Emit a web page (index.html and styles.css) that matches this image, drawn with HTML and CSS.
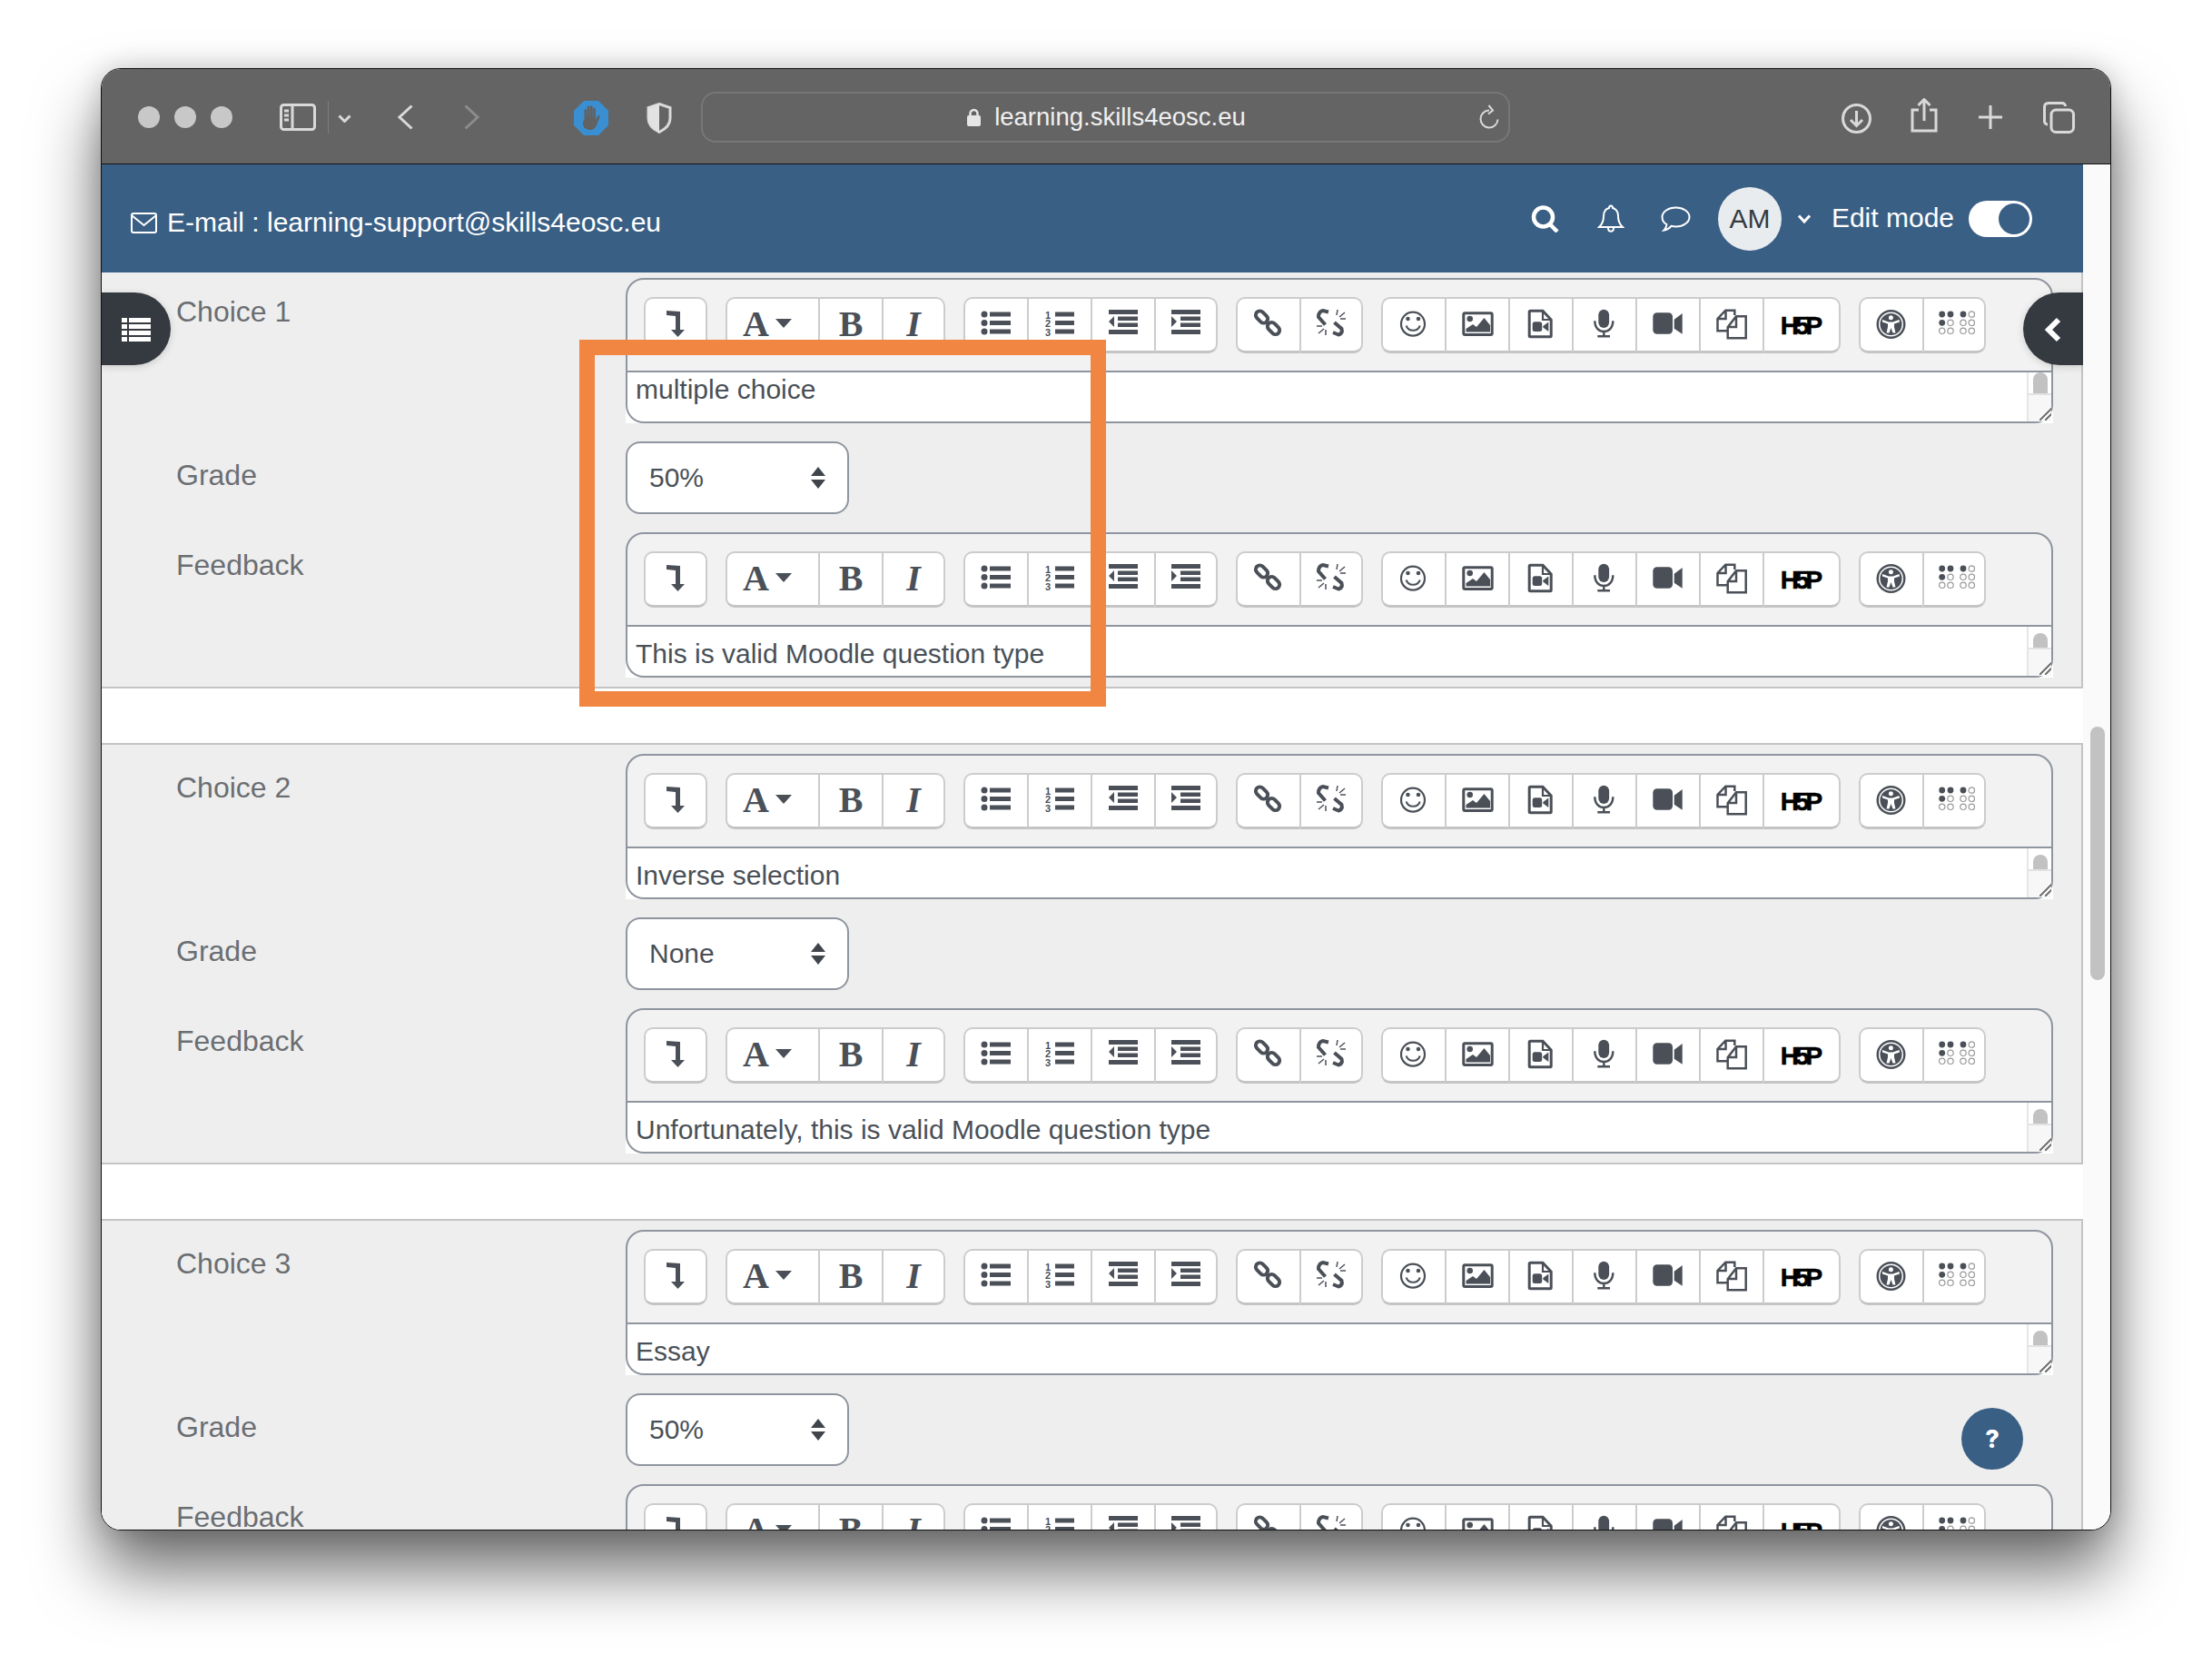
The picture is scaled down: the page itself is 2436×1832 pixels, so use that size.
FILE: index.html
```html
<!DOCTYPE html>
<html lang="en">
<head>
    <meta charset="UTF-8">
    <meta name="viewport" content="width=device-width, initial-scale=1.0">
    <title>Multiple choice question</title>
    <link rel="stylesheet" href="styles.css">
</head>
<body>

<!-- toolbar icons, each drawn on a 40x40 box -->
<svg class="sprite" aria-hidden="true">
    <symbol id="i-collapse" viewBox="0 0 40 40"><path d="M10 5l15 1v20h5l-7.500 8-7.500-8h5V11l-10-1z"/></symbol>
    <symbol id="i-ul" viewBox="0 0 40 40"><circle cx="7" cy="9" r="3.500"/><circle cx="7" cy="18.500" r="3.500"/><circle cx="7" cy="28" r="3.500"/><path d="M13 6.500h23v5H13zM13 16h23v5H13zM13 25.500h23v5H13z"/></symbol>
    <symbol id="i-ol" viewBox="0 0 21 40"><path d="M0 6.500h21v5H0zM0 16h21v5H0zM0 25.500h21v5H0z"/></symbol>
    <symbol id="i-outdent" viewBox="0 0 40 40"><path d="M4 4h32v5H4zM14 11.500h22v4.500H14zM14 18.500h22v4.500H14zM4 26h32v5H4zM10 11v12l-6-6z"/></symbol>
    <symbol id="i-indent" viewBox="0 0 40 40"><path d="M4 4h32v5H4zM14 11.500h22v4.500H14zM14 18.500h22v4.500H14zM4 26h32v5H4zM4 11v12l6-6z"/></symbol>
    <symbol id="i-link" viewBox="0 0 40 40"><g class="line"><rect x="5" y="7.500" width="15" height="9" rx="4.500" transform="rotate(45 12.500 12)"/><rect x="18" y="20" width="15" height="9" rx="4.500" transform="rotate(45 25.500 24.500)"/></g></symbol>
    <symbol id="i-unlink" viewBox="0 0 40 40"><g class="line"><path d="M17 6.500L11 5Q6 6 6 12l7.500 8.500M23.500 18l8 7q1.500 5-3.500 6.500L22 29"/></g><g class="thin hair"><path d="M27 4l-1 6M35 7l-6 5M36 14h-6M4 22h6M6 30l6-5M14 32v-6"/></g></symbol>
    <symbol id="i-emoji" viewBox="0 0 40 40"><circle class="thin" cx="19" cy="19.700" r="13"/><circle cx="13.500" cy="14" r="2.300"/><circle cx="25" cy="14" r="2.300"/><path class="thin" d="M11.700 21.500c2 7 13 7 15 0"/></symbol>
    <symbol id="i-image" viewBox="0 0 40 40"><rect class="line thick" x="4.800" y="7.800" width="31.400" height="23.700" rx="1.500"/><circle cx="11.700" cy="14" r="3.300"/><path d="M7.500 28.500V25l7.500-5 4 3 8.500-10 6.500 8v7.500z"/></symbol>
    <symbol id="i-doc" viewBox="0 0 40 40"><path class="line thick" d="M8.500 5.200H22l9.200 9.800v17.800q0 1-1 1H8.500q-1.300 0-1.300-1V6.200q0-1 1.300-1z"/><path class="line thin" d="M22 5.200v9.800h9.200"/><rect x="10.700" y="17.300" width="10.500" height="10.700" rx="2.500"/><path d="M22.300 22l6-4.500v10.500l-6-4.500z"/></symbol>
    <symbol id="i-mic" viewBox="0 0 40 40"><rect x="13.300" y="3.700" width="11.800" height="20.300" rx="5.900"/><path class="line mic-arc" d="M9.300 16.300c0 15.700 20 15.700 20 0M19.300 28v4.500"/><path d="M12.300 32h13.700v2.500H12.300z"/></symbol>
    <symbol id="i-video" viewBox="0 0 40 40"><rect x="3.300" y="7.300" width="21.700" height="23.400" rx="4.500"/><path d="M26.700 14.700L35.700 8v22.700l-9-6z"/></symbol>
    <symbol id="i-copy" viewBox="0 0 40 40"><path class="line mic-arc" d="M23.300 10V4.700h-10L4.500 14v13.300H15M13.500 4.700V14H4.500"/><path class="line mic-arc" d="M25 11.300h10.700v24H15.700v-12zM25 11.300V23h-9.300"/></symbol>
    <symbol id="i-access" viewBox="0 0 40 40"><circle cx="19.500" cy="20" r="16"/><circle class="white-line" cx="19.500" cy="20" r="12.800"/><circle class="white-fill" cx="19.400" cy="12.700" r="2.500"/><path class="white-fill" d="M10 15l7 2.500h4.500l7-2.500.500 2.500-6 2V23l1.500 6.500h-3L19.500 24l-2 5.500h-3L16 23v-3.500l-6-2z"/></symbol>
    <symbol id="i-braille" viewBox="0 0 46 40">
        <circle cx="9.700" cy="9" r="3.400"/><circle cx="19" cy="9" r="3.400"/><circle cx="33" cy="9" r="3.400"/><circle class="dot" cx="42.300" cy="9" r="3.200"/>
        <circle cx="9.700" cy="18.300" r="3.400"/><circle class="dot" cx="19" cy="18.300" r="3.200"/><circle class="dot" cx="33" cy="18.300" r="3.200"/><circle class="dot" cx="42.300" cy="18.300" r="3.200"/>
        <circle class="dot" cx="9.700" cy="27.300" r="3.200"/><circle class="dot" cx="19" cy="27.300" r="3.200"/><circle class="dot" cx="33" cy="27.300" r="3.200"/><circle class="dot" cx="42.300" cy="27.300" r="3.200"/>
    </symbol>
</svg>

<div class="stage">
    <div class="window">

        <div class="browserbar">
            <span class="traffic"><i></i><i></i><i></i></span>

            <svg class="ic-sidebar" viewBox="0 0 40 30"><rect x="1.500" y="1.500" width="37" height="27" rx="3"/><path d="M14 1.500v27M5 8h5M5 13h5M5 18h5"/></svg>
            <span class="bar-sep"></span>
            <svg class="ic-down" viewBox="0 0 15 9"><path d="M1.500 1.500l6 6 6-6"/></svg>
            <svg class="ic-back" viewBox="0 0 17 28"><path d="M15.500 1.500L2 14l13.500 12.500"/></svg>
            <svg class="ic-forward" viewBox="0 0 17 28"><path d="M1.500 1.500L15 14 1.500 26.500"/></svg>

            <svg class="ic-hand" viewBox="0 0 38 38">
                <path class="octagon" d="M11 0h16l11 11v16L27 38H11L0 27V11z"/>
                <path class="hand" d="M11.500 20v-9.500c0-1.800 2.800-1.800 2.800 0V17h.4V7c0-1.800 2.800-1.800 2.800 0v10h.4V6.500c0-1.800 2.800-1.800 2.800 0V17h.4V9c0-1.800 2.800-1.800 2.800 0v12l2-4c1-1.800 3.400-.800 2.600 1l-3.600 9c-1.200 3-3.500 5-7 5-5 0-8-3-8-8z"/>
            </svg>
            <svg class="ic-shield" viewBox="0 0 28 34"><path class="shield-line" d="M14 1.500l12 4v12c0 7-6 12-12 15-6-3-12-8-12-15v-12z"/><path class="shield-fill" d="M14 1.500v31c-6-3-12-8-12-15v-12z"/></svg>

            <div class="urlbar">
                <span></span>
                <span class="url">
                    <svg class="ic-lock" viewBox="0 0 15 20"><path class="shackle" d="M3.500 9V6a4 4 0 018 0v3"/><rect y="8" width="15" height="12" rx="2"/></svg>
                    learning.skills4eosc.eu
                </span>
                <svg class="ic-reload" viewBox="0 0 22 28"><path d="M11 6.500a9.500 9.500 0 109.500 10M10.500 1l4.500 5.500-5 4"/></svg>
            </div>

            <svg class="ic-download" viewBox="0 0 33 33"><circle cx="16.500" cy="16.500" r="15"/><path d="M16.500 8v16M10 18l6.500 6.500L23 18"/></svg>
            <svg class="ic-share" viewBox="0 0 30 38"><path d="M9 13H2v23h26V13h-7M15 25V2M8.500 8L15 1.500 21.500 8"/></svg>
            <svg class="ic-plus" viewBox="0 0 28 28"><path d="M14 1v26M1 14h26"/></svg>
            <svg class="ic-tabs" viewBox="0 0 35 35"><rect x="9" y="9" width="24.500" height="24.500" rx="5"/><path d="M5 25c-2 0-3.500-1.500-3.500-3.500V6C1.500 3 3 1.500 6 1.500h15c2 0 3.500 1.500 3.500 3.500"/></svg>
        </div>

        <div class="viewport">
            <div class="page">

                <header class="topnav">
                    <div class="support">
                        <svg class="ic-mail" viewBox="0 0 29 23"><rect x="1" y="1" width="27" height="21" rx="2"/><path d="M1.500 3.500L14.500 14l13-10.500"/></svg>
                        <span>E-mail : learning-support@skills4eosc.eu</span>
                    </div>
                    <div class="usernav">
                        <svg class="ic-search" viewBox="0 0 31 30"><circle cx="13.500" cy="13" r="10.500"/><path d="M21 21l8 8"/></svg>
                        <svg class="ic-bell" viewBox="0 0 30 32"><path d="M15 1.500c-1.500 0-2 1-2 2.500-4 1-6 4-6 9 0 6-1.500 9-5 12h26c-3.500-3-5-6-5-12 0-5-2-8-6-9 0-1.500-.500-2.500-2-2.500zM12 26c0 5 6 5 6 0"/></svg>
                        <svg class="ic-chat" viewBox="0 0 33 28"><path d="M16.500 1.500c8 0 15 4.500 15 10.500s-7 10.500-15 10.500c-2 0-3.500-.200-5-.700-2 2.500-5 4.200-8 4.700 1.500-1.500 2.700-3.500 3-6.300C3.500 18.500 1.500 15.500 1.500 12c0-6 7-10.500 15-10.500z"/></svg>
                        <span class="avatar">AM</span>
                        <svg class="ic-caret" viewBox="0 0 16 12"><path d="M2 2.500l6 6.500 6-6.500"/></svg>
                        <span class="editmode">Edit mode</span>
                        <span class="toggle"><i></i></span>
                    </div>
                </header>

                <div id="choices"></div>

                <button class="drawer drawer-left" type="button">
                    <svg class="ic-list" viewBox="0 0 32 26"><path d="M0 0h6v5H0zM8 0h24v5H8zM0 7h6v5H0zM8 7h24v5H8zM0 14h6v5H0zM8 14h24v5H8zM0 21h6v5H0zM8 21h24v5H8z"/></svg>
                </button>
                <button class="drawer drawer-right" type="button">
                    <svg class="ic-left" viewBox="0 0 20 28"><path d="M16 3L5 14l11 11"/></svg>
                </button>
                <button class="help" type="button">?</button>
            </div>
            <div class="vscroll"><span></span></div>
        </div>
    </div>

    <!-- orange annotation drawn on the screenshot -->
    <div class="callout"></div>
</div>

<script>
    const use = id => `<svg class="icon"><use href="#${id}"/></svg>`;

    const toolbar = `
        <div class="toolbar">
            <div class="group"><span class="btn">${use('i-collapse')}</span></div>
            <div class="group">
                <span class="btn btn-style"><span class="serif serif-a">A</span><i class="tri"></i></span>
                <span class="btn"><span class="serif">B</span></span>
                <span class="btn"><span class="serif serif-i">I</span></span>
            </div>
            <div class="group">
                <span class="btn">${use('i-ul')}</span>
                <span class="btn btn-ol"><span class="ol-nums">1<br>2<br>3</span><svg class="icon icon-ol"><use href="#i-ol"/></svg></span>
                <span class="btn">${use('i-outdent')}</span>
                <span class="btn">${use('i-indent')}</span>
            </div>
            <div class="group">
                <span class="btn">${use('i-link')}</span>
                <span class="btn">${use('i-unlink')}</span>
            </div>
            <div class="group">
                <span class="btn">${use('i-emoji')}</span>
                <span class="btn">${use('i-image')}</span>
                <span class="btn">${use('i-doc')}</span>
                <span class="btn">${use('i-mic')}</span>
                <span class="btn">${use('i-video')}</span>
                <span class="btn">${use('i-copy')}</span>
                <span class="btn btn-h5p"><span class="h5p">H5P</span></span>
            </div>
            <div class="group">
                <span class="btn">${use('i-access')}</span>
                <span class="btn"><svg class="icon icon-braille"><use href="#i-braille"/></svg></span>
            </div>
        </div>`;

    const editor = (text, extra = '') => `
        <div class="editor">
            ${toolbar}
            <div class="editor-body">
                <div class="editor-inner">
                    <div class="editor-text ${extra}">${text}</div>
                    <div class="editor-scroll"><div class="scroll-top"><i></i></div><div class="scroll-grip"></div></div>
                </div>
            </div>
        </div>`;

    const select = value => `
        <div class="select">
            <span>${value}</span>
            <svg class="select-arrows" viewBox="0 0 16 24"><path d="M8 0l8 10H0zM0 14h16L8 24z"/></svg>
        </div>`;

    const choices = [
        { name: 'Choice 1', answer: 'multiple choice', grade: '50%', feedback: 'This is valid Moodle question type', cls: 'box-first', extra: 'editor-text-up' },
        { name: 'Choice 2', answer: 'Inverse selection', grade: 'None', feedback: 'Unfortunately, this is valid Moodle question type', cls: '', extra: '' },
        { name: 'Choice 3', answer: 'Essay', grade: '50%', feedback: '', cls: '', extra: '' }
    ];

    document.getElementById('choices').innerHTML = choices.map(c => `
        <section class="box ${c.cls}">
            <div class="row row-editor"><label>${c.name}</label>${editor(c.answer, c.extra)}</div>
            <div class="row row-select"><label>Grade</label>${select(c.grade)}</div>
            <div class="row"><label>Feedback</label>${editor(c.feedback)}</div>
        </section>`).join('');
</script>
</body>
</html>
```

FILE: styles.css
```css
* {
    box-sizing: border-box;
}
html, body {
    margin: 0;
    padding: 0;
    background: #fff;
}
body {
    font-family: 'Liberation Sans', Arial, sans-serif;
    font-size: 30px;
    color: #495057;
}
.sprite {
    position: absolute;
    width: 0;
    height: 0;
}
.stage {
    position: relative;
    width: 2436px;
    height: 1832px;
    padding: 75px 0 0 111px;
    overflow: hidden;
}
.window {
    display: flex;
    flex-direction: column;
    width: 2214px;
    height: 1610px;
    background: #fff;
    border: 1px solid #111;
    border-radius: 22px;
    overflow: hidden;
    box-shadow: 0 44px 72px rgba(0, 0, 0, 0.58), 0 0 30px rgba(0, 0, 0, 0.18);
}

/* safari bar */
.browserbar {
    display: flex;
    align-items: center;
    flex: none;
    height: 105px;
    padding: 0 0 0 40px;
    background: #646464;
    border-bottom: 1px solid #111;
}
.browserbar svg {
    flex: none;
    fill: none;
    stroke: #d9d9d9;
    stroke-width: 3;
}
.traffic {
    display: flex;
    gap: 16px;
    margin-top: 2px;
}
.traffic i {
    width: 24px;
    height: 24px;
    border-radius: 50%;
    background: #c8c8c8;
}
.ic-sidebar {
    width: 40px;
    height: 30px;
    margin: 2px 0 0 52px;
}
.bar-sep {
    width: 1px;
    height: 36px;
    margin: 2px 0 0 13px;
    background: #7d7d7d;
}
.ic-down {
    width: 15px;
    height: 9px;
    margin: 4px 0 0 10px;
}
.ic-back {
    width: 17px;
    height: 28px;
    margin: 2px 0 0 51px;
}
.ic-forward {
    width: 17px;
    height: 28px;
    margin: 2px 0 0 56px;
}
.browserbar .ic-forward {
    stroke: #8c8c8c;
}
.ic-hand {
    width: 38px;
    height: 38px;
    margin: 4px 0 0 104px;
}
.browserbar .octagon {
    fill: #3a8fd2;
    stroke: none;
}
.browserbar .hand {
    fill: #626262;
    stroke: none;
}
.ic-shield {
    width: 28px;
    height: 34px;
    margin: 3px 0 0 42px;
}
.browserbar .shield-fill {
    fill: #e2e2e2;
    stroke: none;
}
.urlbar {
    display: grid;
    grid-template-columns: 1fr auto 1fr;
    align-items: center;
    width: 891px;
    height: 56px;
    margin: 1px 0 0 32px;
    padding: 0 10px 0 12px;
    border: 2px solid #777;
    border-radius: 16px;
}
.url {
    display: flex;
    align-items: center;
    gap: 15px;
    font-size: 27.500px;
    color: #f0f0f0;
}
.browserbar .ic-lock {
    width: 15px;
    height: 20px;
    fill: #e6e6e6;
    stroke: none;
}
.browserbar .shackle {
    fill: none;
    stroke: #e6e6e6;
    stroke-width: 2.500;
}
.ic-reload {
    width: 22px;
    height: 28px;
    justify-self: end;
}
.browserbar .ic-reload {
    stroke-width: 2;
}
.ic-download {
    width: 33px;
    height: 33px;
    margin: 4px 0 0 365px;
}
.ic-share {
    width: 30px;
    height: 38px;
    margin: -3px 0 0 43px;
}
.ic-plus {
    width: 28px;
    height: 28px;
    margin: 2px 0 0 44px;
}
.ic-tabs {
    width: 35px;
    height: 35px;
    margin: 3px 0 0 44px;
}

/* page below the browser bar */
.viewport {
    display: flex;
    flex: 1;
    min-height: 0;
}
.page {
    position: relative;
    width: 2182px;
    overflow: hidden;
    background: #fff;
}
.vscroll {
    flex: 1;
    padding: 619px 0 0 8px;
    background: #fafafa;
}
.vscroll span {
    display: block;
    width: 16px;
    height: 279px;
    border-radius: 8px;
    background: #c2c2c2;
}

.topnav {
    display: flex;
    align-items: center;
    justify-content: space-between;
    height: 119px;
    padding: 0 56px 0 32px;
    background: #3a5f85;
    color: #fff;
}
.topnav svg {
    flex: none;
    fill: none;
    stroke: #fff;
}
.support {
    display: flex;
    align-items: center;
    gap: 11px;
    margin-top: 9px;
}
.ic-mail {
    width: 29px;
    height: 23px;
    stroke-width: 2;
}
.usernav {
    display: flex;
    align-items: center;
}
.ic-search {
    width: 31px;
    height: 30px;
    stroke-width: 4.500;
}
.ic-bell {
    width: 30px;
    height: 32px;
    margin-left: 42px;
    stroke-width: 2;
}
.ic-chat {
    width: 33px;
    height: 28px;
    margin-left: 40px;
    stroke-width: 2;
}
.avatar {
    display: flex;
    align-items: center;
    justify-content: center;
    width: 70px;
    height: 70px;
    margin-left: 30px;
    border-radius: 50%;
    background: #e9ecef;
    color: #343a40;
}
.ic-caret {
    width: 16px;
    height: 12px;
    margin-left: 17px;
    stroke-width: 3;
}
.editmode {
    margin-left: 22px;
    margin-bottom: 2px;
}
.toggle {
    display: flex;
    justify-content: flex-end;
    align-items: center;
    width: 70px;
    height: 40px;
    margin-left: 16px;
    padding-right: 3px;
    border-radius: 20px;
    background: #fff;
}
.toggle i {
    width: 34px;
    height: 34px;
    border-radius: 50%;
    background: #3a5f85;
}

/* one choice block */
.box {
    height: 464px;
    margin-bottom: 60px;
    padding: 10px 32px 0 0;
    background: #eeeeee;
    border-top: 2px solid #c4c4c4;
    border-bottom: 2px solid #c4c4c4;
    border-right: 2px solid #c4c4c4;
    overflow: hidden;
}
.box-first {
    height: 458px;
    padding-top: 6px;
    border-top: 0;
}
.row {
    display: grid;
    grid-template-columns: 577px 1572px;
    margin-bottom: 20px;
}
.row label {
    padding: 18px 0 0 82px;
    font-size: 32px;
    color: #6a6e72;
}
.row-editor label,
.row-select label {
    padding-top: 19px;
}

.editor {
    height: 160px;
}
.toolbar {
    display: flex;
    gap: 20px;
    height: 104px;
    padding: 19px 18px;
    background: #f2f2f2;
    border: 2px solid #8f959e;
    border-radius: 20px 20px 0 0;
}
.group {
    display: flex;
    height: 62px;
}
.btn {
    display: flex;
    align-items: center;
    justify-content: center;
    width: 70px;
    background: #fff;
    border-top: 2px solid #cccccc;
    border-bottom: 3px solid #c4c4c4;
    border-left: 2px solid #cccccc;
}
.btn:first-child {
    border-radius: 10px 0 0 10px;
}
.btn:last-child {
    border-right: 2px solid #cccccc;
    border-radius: 0 10px 10px 0;
}
.btn:only-child {
    border-radius: 10px;
}
.btn-style {
    width: 102px;
    justify-content: flex-start;
    gap: 7px;
    padding-left: 17px;
}
.btn-h5p {
    width: 86px;
}
.btn-ol {
    gap: 3px;
}
.icon {
    width: 40px;
    height: 40px;
    margin-bottom: 1px;
    fill: #4b5058;
    overflow: visible;
}
.icon-braille {
    width: 46px;
}
.icon-ol {
    width: 21px;
}
.line {
    fill: none;
    stroke: #4b5058;
    stroke-width: 4;
}
.thick {
    stroke-width: 3;
}
.mic-arc {
    stroke-width: 2.500;
}
.thin {
    fill: none;
    stroke: #4b5058;
    stroke-width: 2.200;
}
.hair {
    stroke-width: 1.500;
}
.dot {
    fill: none;
    stroke: #999;
    stroke-width: 1.200;
}
.white-line {
    fill: none;
    stroke: #fff;
    stroke-width: 1.500;
}
.white-fill {
    fill: #fff;
}
.ol-nums {
    width: 8px;
    margin-bottom: 1px;
    font-size: 11px;
    font-weight: bold;
    line-height: 9.500px;
    color: #4b5058;
}
.serif {
    font-family: 'Liberation Serif', serif;
    font-weight: bold;
    font-size: 40px;
    line-height: 1;
    color: #4b5058;
    margin-bottom: 2px;
}
.serif-i {
    font-style: italic;
}
.tri {
    width: 0;
    height: 0;
    margin-bottom: 4px;
    border-left: 9px solid transparent;
    border-right: 9px solid transparent;
    border-top: 10px solid #4b5058;
}
.h5p {
    font-weight: bold;
    font-size: 28px;
    line-height: 1;
    color: #000;
    letter-spacing: -4px;
    -webkit-text-stroke: 0.5px #000;
    padding-right: 4px;
    margin-top: 2px;
}

.editor-body {
    height: 56px;
    background: #fff;
}
.editor-inner {
    display: flex;
    height: 56px;
    border: 2px solid #8f959e;
    border-top: 0;
    border-radius: 0 0 20px 20px;
}
.editor-text {
    flex: 1;
    padding: 10px 0 0 9px;
    line-height: 40px;
    overflow: hidden;
}
.editor-text-up {
    padding-top: 0;
    margin-top: -1px;
}
.editor-scroll {
    width: 27px;
    border-left: 2px solid #e6e6e6;
}
.scroll-top {
    height: 25px;
    padding: 7px 0 0 5px;
    border-bottom: 2px solid #e2e2e2;
}
.scroll-top i {
    display: block;
    width: 16px;
    height: 16px;
    border-radius: 8px 8px 0 0;
    background: #c2c2c2;
}
.editor-text-up + .editor-scroll .scroll-top {
    padding-top: 0;
}
.editor-text-up + .editor-scroll .scroll-top i {
    height: 23px;
}
.scroll-grip {
    height: 29px;
    background:
        linear-gradient(135deg, transparent calc(50% - 1px), #777 calc(50% - 1px), #777 calc(50% + 1px), transparent calc(50% + 1px)) 18px 20px / 8px 8px no-repeat,
        linear-gradient(135deg, transparent calc(50% - 1px), #777 calc(50% - 1px), #777 calc(50% + 1px), transparent calc(50% + 1px)) 12px 14px / 14px 14px no-repeat,
        #f7f7f7;
}

.select {
    display: flex;
    align-items: center;
    justify-content: space-between;
    width: 246px;
    height: 80px;
    padding: 0 24px;
    background: #fff;
    border: 2px solid #8f959e;
    border-radius: 16px;
}
.select-arrows {
    width: 16px;
    height: 24px;
    fill: #3f454b;
}

/* floating buttons over the page */
.drawer {
    position: absolute;
    top: 141px;
    display: flex;
    align-items: center;
    justify-content: center;
    height: 80px;
    padding: 2px 0 0;
    border: 0;
    background: #343a40;
    box-shadow: 0 2px 8px rgba(0, 0, 0, 0.15);
}
.drawer-left {
    left: 0;
    width: 76px;
    border-radius: 0 40px 40px 0;
}
.drawer-right {
    right: 0;
    width: 66px;
    border-radius: 40px 0 0 40px;
}
.ic-list {
    width: 32px;
    height: 26px;
    fill: #fff;
}
.ic-left {
    width: 20px;
    height: 28px;
    fill: none;
    stroke: #fff;
    stroke-width: 6;
}
.help {
    position: absolute;
    top: 1369px;
    right: 66px;
    width: 68px;
    height: 68px;
    padding: 0;
    border: 0;
    border-radius: 50%;
    background: #3a5f85;
    color: #fff;
    font-family: Inter, sans-serif;
    font-size: 27px;
    font-weight: 800;
}

.callout {
    position: absolute;
    left: 638px;
    top: 374px;
    width: 580px;
    height: 404px;
    border: 17px solid #f18542;
}
```
